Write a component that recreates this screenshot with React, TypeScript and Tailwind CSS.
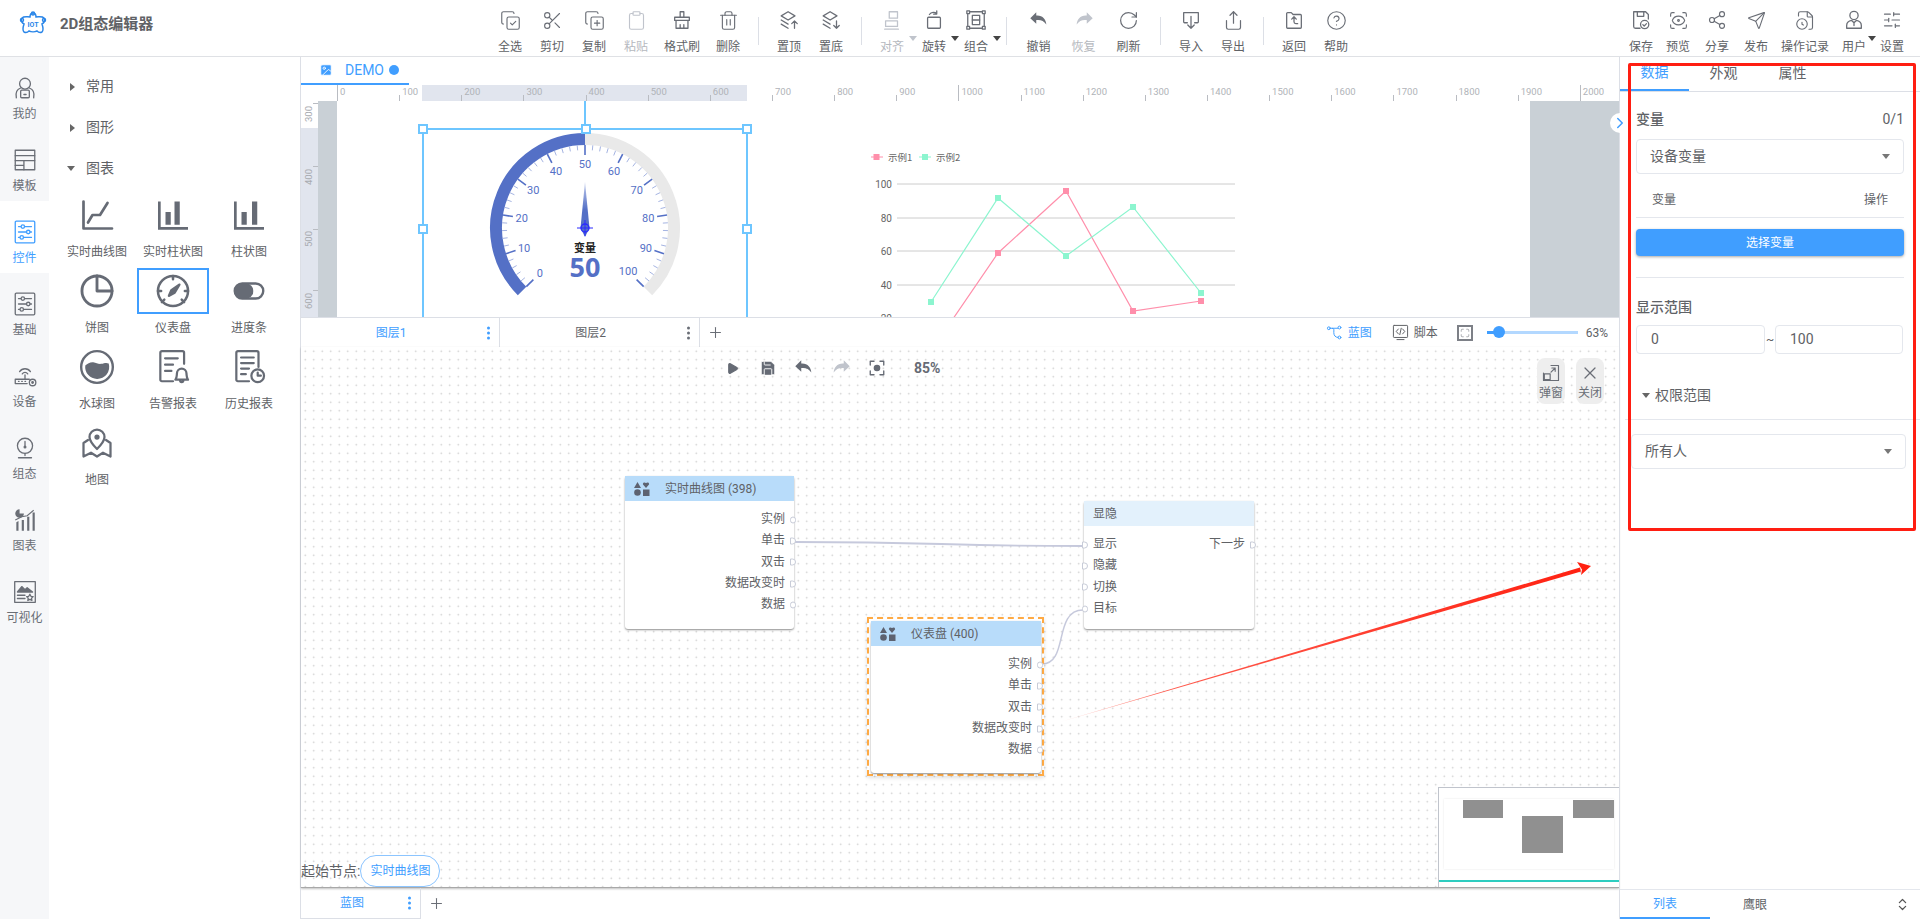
import {
  CircleHelp,
  Clipboard,
  CopyCheck,
  CopyPlus,
  FileClock,
  Maximize,
  Play,
  RotateCw,
  Save,
  ScanEye,
  Scissors,
  Send,
  Share,
  Share2,
  SlidersHorizontal,
  Trash2,
  ChevronRight,
  ChevronsUpDown,
  Plus,
  X,
  Image,
} from "lucide-react";
import type { ReactNode } from "react";

const FONT = "font-['Roboto','Noto_Sans_CJK_SC',sans-serif]";

function Svg({ size = 22, children, fill = "none", sw = 1.4 }: { size?: number; children: ReactNode; fill?: string; sw?: number }) {
  return (
    <svg width={size} height={size} viewBox="0 0 24 24" fill={fill} stroke="currentColor" strokeWidth={sw} strokeLinecap="round" strokeLinejoin="round">
      {children}
    </svg>
  );
}

function Caret({ className = "border-t-[#555]" }: { className?: string }) {
  return <span className={`inline-block h-0 w-0 border-x-[4px] border-t-[5px] border-x-transparent ${className}`} />;
}

/* toolbar drawings */
const Broom = () => (
  <Svg>
    <path d="M10 3h4v6h-4zM4 9h16v3.5H4zM5.5 12.5V21h13v-8.5M10 21v-4M14 21v-4" />
  </Svg>
);
const LayerTop = () => (
  <Svg>
    <path d="M11 3 3.5 7.5 11 12l7.5-4.5zM3.5 12 11 16.5M3.5 16.5 11 21M18 21v-8M15 16l3-3 3 3" />
  </Svg>
);
const LayerBottom = () => (
  <Svg>
    <path d="M11 3 3.5 7.5 11 12l7.5-4.5zM3.5 12 11 16.5M3.5 16.5 11 21M18 13v8M15 18l3 3 3-3" />
  </Svg>
);
const AlignIco = () => (
  <Svg>
    <rect x="9" y="3" width="9" height="7" />
    <rect x="5" y="13" width="13" height="6" />
    <path d="M4 22h15" />
  </Svg>
);
const RotateIco = () => (
  <Svg>
    <rect x="5" y="9" width="14" height="12" rx="1" />
    <path d="M7 6c2-3 6-3 8-1M15 2v3.500h-3.500" />
  </Svg>
);
const GroupIco = () => (
  <Svg>
    <path d="M5 3h14M5 21h14M3 5v14M21 5v14" />
    <rect x="2" y="2" width="3" height="3" />
    <rect x="19" y="2" width="3" height="3" />
    <rect x="2" y="19" width="3" height="3" />
    <rect x="19" y="19" width="3" height="3" />
    <rect x="8" y="7" width="8" height="10" />
    <path d="M8 12h8" />
  </Svg>
);
const UndoIco = () => (
  <svg width="22" height="22" viewBox="0 0 24 24" fill="currentColor">
    <path d="M9 7V3.500L2.500 10 9 16v-4c5-.5 8 .5 11 5-.5-6-4-10.500-11-10z" />
  </svg>
);
const RedoIco = () => (
  <svg width="22" height="22" viewBox="0 0 24 24" fill="currentColor">
    <path d="M15 7V3.500L21.500 10 15 16v-4c-5-.5-8 .5-11 5 .5-6 4-10.500 11-10z" />
  </svg>
);
const ImportIco = () => (
  <Svg>
    <path d="M8 15H5a1 1 0 0 1-1-1V4h16v10a1 1 0 0 1-1 1h-3M12 8v13M8.500 17.500 12 21l3.500-3.500" />
  </Svg>
);
const BackIco = () => (
  <Svg>
    <path d="M5 4h4l2 2h8a1 1 0 0 1 1 1v13a1 1 0 0 1-1 1H5a1 1 0 0 1-1-1V5a1 1 0 0 1 1-1z" />
    <path d="M9.500 11 12 8.500l2.500 2.500M12 8.500V14a2 2 0 0 0 2 2h2" />
  </Svg>
);
const SaveCheck = () => (
  <Svg>
    <path d="M11 21H6a2 2 0 0 1-2-2V3h13l3 3v5" />
    <path d="M8 3v5h7V3" />
    <circle cx="16" cy="17" r="4.500" />
    <path d="m14 17 1.500 1.500L18 16" />
  </Svg>
);
const UserIco = ({ size = 22 }: { size?: number }) => (
  <Svg size={size}>
    <circle cx="12" cy="7" r="4.500" />
    <path d="M4 21v-3c0-3 3-5 5.500-5.500L12 15l2.500-2.500C17 13 20 15 20 18v3zM12 15v3" />
  </Svg>
);

type Tool = { label: string; w: string; icon: ReactNode; off?: boolean; caret?: boolean };
type Piece = Tool | "sep";

const tools: Piece[] = [
  { label: "全选", w: "w-[42px]", icon: <CopyCheck size={21} strokeWidth={1.3} /> },
  { label: "剪切", w: "w-[42px]", icon: <Scissors size={21} strokeWidth={1.3} /> },
  { label: "复制", w: "w-[42px]", icon: <CopyPlus size={21} strokeWidth={1.3} /> },
  { label: "粘贴", w: "w-[42px]", icon: <Clipboard size={21} strokeWidth={1.3} />, off: true },
  { label: "格式刷", w: "w-[50px]", icon: <Broom /> },
  { label: "删除", w: "w-[42px]", icon: <Trash2 size={21} strokeWidth={1.3} /> },
  "sep",
  { label: "置顶", w: "w-[42px]", icon: <LayerTop /> },
  { label: "置底", w: "w-[42px]", icon: <LayerBottom /> },
  "sep",
  { label: "对齐", w: "w-[42px]", icon: <AlignIco />, off: true, caret: true },
  { label: "旋转", w: "w-[42px]", icon: <RotateIco />, caret: true },
  { label: "组合", w: "w-[42px]", icon: <GroupIco />, caret: true },
  "sep",
  { label: "撤销", w: "w-[45px]", icon: <UndoIco /> },
  { label: "恢复", w: "w-[45px]", icon: <RedoIco />, off: true },
  { label: "刷新", w: "w-[45px]", icon: <RotateCw size={21} strokeWidth={1.4} /> },
  "sep",
  { label: "导入", w: "w-[42px]", icon: <ImportIco /> },
  { label: "导出", w: "w-[42px]", icon: <Share size={21} strokeWidth={1.4} /> },
  "sep",
  { label: "返回", w: "w-[42px]", icon: <BackIco /> },
  { label: "帮助", w: "w-[42px]", icon: <CircleHelp size={21} strokeWidth={1.3} /> },
];

const rightTools: Tool[] = [
  { label: "保存", w: "w-[38px]", icon: <SaveCheck /> },
  { label: "预览", w: "w-[36px]", icon: <ScanEye size={21} strokeWidth={1.3} /> },
  { label: "分享", w: "w-[42px]", icon: <Share2 size={20} strokeWidth={1.4} /> },
  { label: "发布", w: "w-[36px]", icon: <Send size={19} strokeWidth={1.4} /> },
  { label: "操作记录", w: "w-[62px]", icon: <FileClock size={21} strokeWidth={1.3} /> },
  { label: "用户", w: "w-[36px]", icon: <UserIco />, caret: true },
  { label: "设置", w: "w-[40px]", icon: <SlidersHorizontal size={20} strokeWidth={1.4} /> },
];

function ToolItem({ t }: { t: Tool }) {
  return (
    <div className={`${t.w} relative flex shrink-0 flex-col items-center ${t.off ? "text-[#c0c4cc]" : "text-[#6a6e76]"}`}>
      <div className="flex h-[24px] items-center justify-center">{t.icon}</div>
      <span className={`mt-[7px] text-[12px] leading-[16px] ${t.off ? "text-[#b5b8be]" : "text-[#606266]"}`}>{t.label}</span>
      {t.caret && (
        <span className="absolute top-[16px] right-[-4px]">
          <Caret className={t.off ? "border-t-[#c0c4cc]" : "border-t-[#444]"} />
        </span>
      )}
    </div>
  );
}

function Logo() {
  return (
    <svg width="30" height="30" viewBox="0 0 30 30" fill="none" stroke="#2b86e8" strokeWidth="1.500">
      <path d="M15 4c2 0 3 2 3 4 3 0 6-1 8 1s0 5-2 6c1 3 2 6 0 8-2 1-4 0-5-1-2 1-6 1-8 0-1 1-3 2-5 1-2-2-1-5 0-8-2-1-4-4-2-6s5-1 8-1c0-2 1-4 3-4z" />
      <circle cx="15" cy="4.500" r="1.500" />
      <circle cx="4" cy="11" r="1.500" />
      <circle cx="26" cy="11" r="1.500" />
      <text x="15" y="18" textAnchor="middle" fontSize="7" fontWeight="700" fill="#2b86e8" stroke="none" fontFamily="Roboto">
        IOT
      </text>
    </svg>
  );
}

/* left nav drawings */
const navItems: { label: string; active?: boolean; icon: ReactNode }[] = [
  {
    label: "我的",
    icon: (
      <Svg size={26} sw={1.2}>
        <circle cx="12" cy="8" r="5" />
        <path d="M4 21c-1-5 1-8 4-9M20 21c1-5-1-8-4-9" />
        <rect x="8" y="14" width="8" height="7" rx="1" />
        <path d="M11 18h2" />
      </Svg>
    ),
  },
  {
    label: "模板",
    icon: (
      <Svg size={26} sw={1.2}>
        <rect x="3" y="3" width="18" height="18" />
        <path d="M3 8h18M3 12.500h18M11 12.500V21M3 17h8" />
      </Svg>
    ),
  },
  {
    label: "控件",
    active: true,
    icon: (
      <Svg size={26} sw={1.2}>
        <rect x="3" y="2" width="18" height="20" rx="1" />
        <path d="M6 7h12M6 12h12M6 17h12" />
        <circle cx="10" cy="7" r="1.600" fill="white" />
        <circle cx="15" cy="12" r="1.600" fill="white" />
        <circle cx="9" cy="17" r="1.600" fill="white" />
      </Svg>
    ),
  },
  {
    label: "基础",
    icon: (
      <Svg size={26} sw={1.2}>
        <rect x="3" y="2" width="18" height="20" rx="1" />
        <path d="M6 7h12M6 12h12M6 17h12" />
        <circle cx="10" cy="7" r="1.600" fill="#f6f7f9" />
        <circle cx="15" cy="12" r="1.600" fill="#f6f7f9" />
        <circle cx="9" cy="17" r="1.600" fill="#f6f7f9" />
      </Svg>
    ),
  },
  {
    label: "设备",
    icon: (
      <Svg size={26} sw={1.2}>
        <path d="M7 8a6 6 0 0 1 10 0M9.500 10a3 3 0 0 1 5 0" />
        <path d="M12 11v4M14 19H3v-4h13" />
        <circle cx="19" cy="18" r="3" />
        <circle cx="19" cy="18" r=".7" fill="currentColor" />
        <path d="M6 17h.5M9 17h.5M12 17h.5" />
      </Svg>
    ),
  },
  {
    label: "组态",
    icon: (
      <Svg size={26} sw={1.2}>
        <circle cx="12" cy="10" r="7" />
        <path d="M12 6v5M6 21h12M12 17v2" />
        <circle cx="12" cy="11" r=".8" fill="currentColor" />
      </Svg>
    ),
  },
  {
    label: "图表",
    icon: (
      <svg width="26" height="26" viewBox="0 0 24 24" fill="currentColor">
        <path d="M3 6a4 4 0 0 1 4-4v4h4a4 4 0 0 1-8 0z" />
        <path d="M4 14l2-1v9H4zM9 12h2v10H9zM14 9h2v13h-2zM19 5h2v17h-2z" />
        <path d="M3 12l6-3 5-1 6-5" fill="none" stroke="currentColor" strokeWidth="1" />
      </svg>
    ),
  },
  {
    label: "可视化",
    icon: (
      <Svg size={26} sw={1.2}>
        <rect x="2.500" y="2.500" width="19" height="19" />
        <path d="M5 12l4-5 3 3 2-2 5 4z" fill="currentColor" />
        <path d="M5 15h7M5 18h7" />
        <path d="m16.500 14 1 2 2 .3-1.500 1.500.4 2-1.900-1-1.900 1 .4-2-1.500-1.500 2-.3z" />
      </Svg>
    ),
  },
];

function LeftNav() {
  return (
    <div className="flex w-[49px] shrink-0 flex-col bg-[#f6f7f9]">
      {navItems.map((n) => (
        <div key={n.label} className={`flex h-[72px] flex-col items-center pt-[17px] ${n.active ? "bg-white text-[#409eff]" : "text-[#6a6e76]"}`}>
          <div className="flex h-[28px] items-center">{n.icon}</div>
          <span className="mt-[4px] text-[12px] leading-[16px]">{n.label}</span>
        </div>
      ))}
    </div>
  );
}

/* widget palette drawings */
const widgets: { label: string; selected?: boolean; icon: ReactNode }[] = [
  {
    label: "实时曲线图",
    icon: (
      <Svg size={36} sw={1.8}>
        <path d="M3 3v18h19" />
        <path d="M6 17l3-5h5l5-8" />
      </Svg>
    ),
  },
  {
    label: "实时柱状图",
    icon: (
      <svg width="36" height="36" viewBox="0 0 24 24" fill="currentColor">
        <path d="M2 3h1.800v17H22v1.800H2zM7 10h3.500v8.500H7zM13 3h3.500v15.500H13z" />
        <path d="M7 10h3.500v8.500H7zM17.500 3H21v15.500h-3.500z" opacity="0" />
      </svg>
    ),
  },
  {
    label: "柱状图",
    icon: (
      <svg width="36" height="36" viewBox="0 0 24 24" fill="currentColor">
        <path d="M2 3h1.800v17H22v1.800H2zM7 10h3.500v8.500H7zM14 3h3.500v15.500H14z" />
      </svg>
    ),
  },
  {
    label: "饼图",
    icon: (
      <Svg size={38} sw={1.8}>
        <circle cx="12" cy="12" r="9.500" />
        <path d="M12 2.500V12h9.500" />
      </Svg>
    ),
  },
  {
    label: "仪表盘",
    selected: true,
    icon: (
      <Svg size={38} sw={1.6}>
        <circle cx="12" cy="12" r="9.500" />
        <path d="M12 2.500v2M2.500 12h2M19.500 12h2M5 19l1.500-1.500M19 19l-1.500-1.500" />
        <path d="m16 8-5 3.500L9.500 15 13 13z" fill="currentColor" />
      </Svg>
    ),
  },
  {
    label: "进度条",
    icon: (
      <svg width="36" height="36" viewBox="0 0 24 24">
        <rect x="2.500" y="7" width="19" height="10" rx="5" fill="none" stroke="currentColor" strokeWidth="1.600" />
        <rect x="2" y="7" width="13" height="10" rx="5" fill="currentColor" />
        <rect x="15" y="8" width="1.500" height="8" fill="white" />
      </svg>
    ),
  },
  {
    label: "水球图",
    icon: (
      <svg width="38" height="38" viewBox="0 0 24 24">
        <circle cx="12" cy="12" r="10" fill="none" stroke="currentColor" strokeWidth="1.500" />
        <path d="M4.600 11c1.500-1 3-2.200 5-2 2 .3 3 1.200 5 1 2-.2 3-1 4.800-.2A7.500 7.500 0 0 1 12 19.500 7.500 7.500 0 0 1 4.600 11z" fill="currentColor" />
      </svg>
    ),
  },
  {
    label: "告警报表",
    icon: (
      <Svg size={38} sw={1.4}>
        <path d="M12 21H5a1 1 0 0 1-1-1V3a1 1 0 0 1 1-1h13a1 1 0 0 1 1 1v7" />
        <path d="M7 6.500h8M7 10.500h5M7 14.500h4" />
        <path d="M13.500 20c1-1 .8-2.500 1-4a3 3 0 0 1 6 0c.2 1.500 0 3 1 4zM16.500 20.500a1 1 0 0 0 2 0" />
      </Svg>
    ),
  },
  {
    label: "历史报表",
    icon: (
      <Svg size={38} sw={1.4}>
        <path d="M12 21H5a1 1 0 0 1-1-1V3a1 1 0 0 1 1-1h12a1 1 0 0 1 1 1v9" />
        <path d="M7 6h8M7 9.500h8M7 13h5M7 16.500h3" />
        <circle cx="17.500" cy="17.500" r="4" />
        <path d="M17.500 15.500v2h2" />
      </Svg>
    ),
  },
  {
    label: "地图",
    icon: (
      <Svg size={36} sw={1.5}>
        <path d="M12 16c-3-3-5-5.500-5-8a5 5 0 0 1 10 0c0 2.500-2 5-5 8z" />
        <circle cx="12" cy="8" r="1" fill="currentColor" />
        <path d="M6 10 3 12v9l5-2.500 4 2.500 4-2.500 5 2.500v-9l-3-2" />
      </Svg>
    ),
  },
];

function Palette() {
  return (
    <div className="flex w-[252px] shrink-0 flex-col border-r border-[#dcdfe6] pt-[9px]">
      {[
        { label: "常用", open: false },
        { label: "图形", open: false },
        { label: "图表", open: true },
      ].map((g) => (
        <div key={g.label} className="flex h-[41px] items-center text-[14px] text-[#606266]">
          <span className="flex w-[37px] justify-end pr-[11px]">
            {g.open ? <Caret className="border-t-[#666]" /> : <span className="h-0 w-0 border-y-[4px] border-l-[5px] border-y-transparent border-l-[#666]" />}
          </span>
          {g.label}
        </div>
      ))}
      <div className="mt-[3px] grid grid-cols-[76px_76px_76px] pl-[10px]">
        {widgets.map((w) => (
          <div key={w.label} className="flex h-[76px] flex-col items-center">
            <div className={`flex h-[46px] w-[72px] items-center justify-center text-[#666b75] ${w.selected ? "border-2 border-[#409eff]" : ""}`}>{w.icon}</div>
            <span className="mt-[6px] text-[12px] leading-[16px] whitespace-nowrap text-[#606266]">{w.label}</span>
          </div>
        ))}
      </div>
    </div>
  );
}

/* gauge widget */
function Gauge() {
  const cx = 115;
  const cy = 127;
  const pt = (v: number, r: number) => {
    const a = ((225 - v * 2.7) * Math.PI) / 180;
    return { x: cx + r * Math.cos(a), y: cy - r * Math.sin(a) };
  };
  const arc = (from: number, to: number, r: number) => {
    const a = pt(from, r);
    const b = pt(to, r);
    return `M${a.x} ${a.y}A${r} ${r} 0 ${(to - from) * 2.7 > 180 ? 1 : 0} 1 ${b.x} ${b.y}`;
  };
  const ticks = [];
  for (let i = 0; i <= 50; i++) {
    const v = i * 2;
    const major = i % 5 === 0;
    const a = pt(v, 83);
    const b = pt(v, major ? 73 : 78);
    ticks.push(<line key={i} x1={a.x} y1={a.y} x2={b.x} y2={b.y} stroke={major ? "#5470c6" : "#a5b4e2"} strokeWidth={major ? 1.6 : 1} />);
  }
  return (
    <svg className="absolute top-0 left-[133px]" width="230" height="216" viewBox="0 0 230 216">
      <defs>
        <linearGradient id="needle" x1="0" y1="0" x2="0" y2="1">
          <stop offset="0" stopColor="#c3cdec" />
          <stop offset="0.5" stopColor="#5470c6" />
        </linearGradient>
      </defs>
      <path d={arc(50, 100, 89)} fill="none" stroke="#e9e9e9" strokeWidth="12" />
      <path d={arc(0, 50, 89)} fill="none" stroke="#5470c6" strokeWidth="12" />
      {ticks}
      {[0, 10, 20, 30, 40, 50, 60, 70, 80, 90, 100].map((v) => {
        const p = pt(v, v === 100 ? 61 : 64);
        return (
          <text key={v} x={p.x} y={p.y + 4} textAnchor="middle" fontSize="11" fill="#5470c6" fontFamily="Roboto">
            {v}
          </text>
        );
      })}
      <polygon points={`${cx},${cy - 46} ${cx - 4.5},${cy} ${cx},${cy + 9} ${cx + 4.5},${cy}`} fill="url(#needle)" />
      <circle cx={cx} cy={cy} r="4" fill="none" stroke="#2a2aff" strokeWidth="1.300" />
      <path d={`M${cx - 8} ${cy}h16M${cx} ${cy - 8}v16`} stroke="#2a2aff" strokeWidth="1" />
      <text x={cx} y={cy + 24} textAnchor="middle" fontSize="11" fontWeight="700" fill="#222" fontFamily="'Noto Sans CJK SC'">
        变量
      </text>
      <text x={cx} y={cy + 49} textAnchor="middle" fontSize="27" fontWeight="700" fill="#5470c6" fontFamily="'Open Sans',Roboto">
        50
      </text>
    </svg>
  );
}

/* line chart widget, coordinates are page px minus (867, 141) */
function LineChart() {
  const ox = 867;
  const oy = 141;
  const pink = [[931, 351], [998, 253], [1066, 191], [1133, 311], [1201, 301]];
  const green = [[931, 302], [998, 198], [1066, 256], [1133, 207], [1201, 293]];
  const line = (p: number[][]) => p.map(([x, y]) => `${x - ox},${y - oy}`).join(" ");
  const grid = [
    { l: "100", y: 184 },
    { l: "80", y: 218 },
    { l: "60", y: 251 },
    { l: "40", y: 285 },
    { l: "20", y: 318 },
  ];
  return (
    <svg className="absolute top-[40px] left-[530px]" width="380" height="200" viewBox="0 0 380 200">
      <path d="M4 16h12" stroke="#ff8fab" />
      <rect x="6.500" y="13" width="6" height="6" fill="#ff8fab" />
      <text x="21" y="19.500" fontSize="9.500" fill="#666" fontFamily="'Noto Sans CJK SC'">示例1</text>
      <path d="M52 16h12" stroke="#8cf5cf" />
      <rect x="55" y="13" width="6" height="6" fill="#8cf5cf" />
      <text x="69" y="19.500" fontSize="9.500" fill="#666" fontFamily="'Noto Sans CJK SC'">示例2</text>
      {grid.map((g) => (
        <g key={g.l}>
          <line x1="30" x2="368" y1={g.y - oy} y2={g.y - oy} stroke="#cccccc" strokeWidth="1" />
          <text x="25" y={g.y - oy + 3.500} textAnchor="end" fontSize="10" fill="#666" fontFamily="Roboto">{g.l}</text>
        </g>
      ))}
      <polyline points={line(pink)} fill="none" stroke="#ff8fab" strokeWidth="1.200" />
      <polyline points={line(green)} fill="none" stroke="#8cf5cf" strokeWidth="1.200" />
      {pink.map(([x, y]) => <rect key={x} x={x - ox - 3} y={y - oy - 3} width="6" height="6" fill="#ff8fab" />)}
      {green.map(([x, y]) => <rect key={x} x={x - ox - 3} y={y - oy - 3} width="6" height="6" fill="#8cf5cf" />)}
    </svg>
  );
}

function Handle({ className }: { className: string }) {
  return <span className={`absolute h-[10px] w-[10px] border-2 border-[#6ec6ff] bg-white ${className}`} />;
}

function Editor() {
  const marks = Array.from({ length: 22 }, (_, i) => i * 100);
  return (
    <div className="flex h-[232px] shrink-0 flex-col overflow-hidden">
      {/* top ruler */}
      <div className="relative flex h-[16px] shrink-0 pl-[36px]">
        <div className="absolute top-0 bottom-0 left-[121px] w-[325px] bg-[#e1e5ee]" />
        {marks.map((m) => (
          <div key={m} className="relative h-[16px] w-[62.15px] shrink-0">
            <span className={`absolute bottom-0 left-0 w-px bg-[#b9bcc2] ${m % 1000 === 0 ? "h-[16px]" : "h-[6px]"}`} />
            <span className="absolute top-[1px] left-[3px] text-[9.5px] leading-[12px] text-[#b0b3b8]">{m}</span>
          </div>
        ))}
      </div>
      <div className="flex min-h-0 flex-1">
        {/* left ruler */}
        <div className="relative w-[17px] shrink-0">
          <div className="absolute top-[27px] right-0 bottom-0 left-0 bg-[#e1e5ee]" />
          {[
            { l: "300", top: "top-[6px]", tick: "top-[2px]" },
            { l: "400", top: "top-[69px]", tick: "top-[65px]" },
            { l: "500", top: "top-[131px]", tick: "top-[128px]" },
            { l: "600", top: "top-[193px]", tick: "top-[189px]" },
          ].map((r) => (
            <div key={r.l}>
              <span className={`absolute right-0 h-px w-[5px] bg-[#b9bcc2] ${r.tick}`} />
              <span className={`absolute left-[-2px] h-[14px] w-[20px] -rotate-90 text-center text-[9.5px] leading-[14px] text-[#a8abb0] ${r.top}`}>{r.l}</span>
            </div>
          ))}
        </div>
        <div className="w-[19px] shrink-0 bg-[#c9d0d6]" />
        {/* canvas */}
        <div className="relative min-w-0 flex-1 overflow-hidden bg-white">
          <Gauge />
          <LineChart />
          <div className="absolute top-[27px] left-[85px] h-[260px] w-[326px] border-2 border-[#6ec6ff]">
            <Handle className="top-[-6px] left-[-6px]" />
            <Handle className="top-[-6px] left-[157px]" />
            <Handle className="top-[-6px] right-[-6px]" />
            <Handle className="top-[94px] left-[-6px]" />
            <Handle className="top-[94px] right-[-6px]" />
          </div>
          <span className="absolute top-0 left-[247px] h-[24px] w-[2px] bg-[#6ec6ff]" />
        </div>
        <div className="w-[89px] shrink-0 bg-[#c9d0d6]" />
      </div>
    </div>
  );
}

function Dots({ active }: { active?: boolean }) {
  const c = active ? "bg-[#409eff]" : "bg-[#6a6e76]";
  return (
    <span className="absolute top-1/2 right-[9px] flex -translate-y-1/2 flex-col gap-[2px]">
      <i className={`h-[3px] w-[3px] rounded-full ${c}`} />
      <i className={`h-[3px] w-[3px] rounded-full ${c}`} />
      <i className={`h-[3px] w-[3px] rounded-full ${c}`} />
    </span>
  );
}

function LayerRow() {
  return (
    <div className="flex h-[30px] shrink-0 items-center border-t border-[#dcdfe6] text-[12px]">
      <div className="relative flex h-full w-[199px] items-center justify-center border-r border-[#dcdfe6] pr-[18px] text-[#409eff]">
        图层1
        <Dots active />
      </div>
      <div className="relative flex h-full w-[200px] items-center justify-center border-r border-[#dcdfe6] pr-[18px] text-[#606266]">
        图层2
        <Dots />
      </div>
      <Plus size={17} strokeWidth={1.5} className="ml-[7px] text-[#6a6e76]" />
      <div className="ml-auto flex items-center pr-[11px] text-[#606266]">
        <span className="flex w-[46px] items-center justify-between text-[#409eff]">
          <Svg size={17}>
            <circle cx="4" cy="6" r="2" />
            <circle cx="19" cy="5" r="2" />
            <circle cx="19" cy="19" r="2" />
            <path d="M6 6h11M9 6c3 0 2 3 2 6 0 4 2 7 6 7" />
          </Svg>
          蓝图
        </span>
        <span className="ml-[20px] flex w-[46px] items-center justify-between">
          <Svg size={17}>
            <rect x="2" y="2" width="20" height="17" rx="1" />
            <path d="M7 22h10M9 7l-3 3.500L9 14M15 7l3 3.500-3 3.500M13 6l-2 9" />
          </Svg>
          脚本
        </span>
        <span className="ml-[19px] flex h-[16px] w-[16px] items-center justify-center border-2 border-[#7d8087] text-[#7d8087]">
          <Maximize size={10} strokeWidth={1.5} />
        </span>
        <div className="relative ml-[14px] h-[3px] w-[91px] bg-[#b3d8ff]">
          <span className="absolute top-0 left-0 h-[3px] w-[11px] bg-[#409eff]" />
          <span className="absolute top-[-5px] left-[6px] h-[12px] w-[12px] rounded-full bg-[#409eff]" />
        </div>
        <span className="ml-[8px]">63%</span>
      </div>
    </div>
  );
}

/* blueprint nodes */
function Port({ side, round }: { side: "l" | "r"; round?: boolean }) {
  return (
    <span
      className={`absolute top-1/2 h-[7px] w-[6px] -translate-y-1/2 border border-[#c8ccd8] bg-white ${side === "r" ? "right-[-2px]" : "left-[-2px]"} ${
        round ? "rounded-full" : "rounded-r-full"
      }`}
    />
  );
}

function NodeCard({
  pos,
  title,
  head,
  icon,
  outs,
  ins,
  pad,
  bar,
}: {
  pos: string;
  title: string;
  head: string;
  icon?: boolean;
  outs: { t: string; round?: boolean }[];
  ins?: { t: string; round?: boolean }[];
  pad: string;
  bar?: boolean;
}) {
  return (
    <div className={`absolute rounded-[3px] bg-white shadow-[0_1px_2px_rgba(0,0,0,0.45)] ${pos}`}>
      <div className={`flex h-[25px] items-center text-[12px] text-[#606266] ${head} ${pad}`}>
        {icon && (
          <svg width="16" height="14" viewBox="0 0 16 14" fill="#5d6270" className="mr-[15px]">
            <path d="M3.500 0 7 6H0zM12 6 9 2.500C8.500 1 10 -.5 12 1c2-1.500 3.500 0 3 1.500z" />
            <circle cx="3.500" cy="10.500" r="3.300" />
            <rect x="9" y="7.500" width="6.500" height="6.500" />
          </svg>
        )}
        {title}
      </div>
      <div className="flex justify-between pt-[8px] text-[12px] leading-[21.3px] text-[#606266]">
        {ins && (
          <div className="flex flex-col">
            {ins.map((r) => (
              <div key={r.t} className="relative h-[21.3px] pl-[9px]">
                <Port side="l" round={r.round} />
                {r.t}
              </div>
            ))}
          </div>
        )}
        <div className="ml-auto flex flex-col items-end">
          {outs.map((r) => (
            <div key={r.t} className={`relative h-[21.3px] pr-[9px] ${bar ? "w-full text-right" : ""}`}>
              {r.t}
              <Port side="r" round={r.round} />
            </div>
          ))}
        </div>
      </div>
    </div>
  );
}

const widgetOuts = [
  { t: "实例", round: true },
  { t: "单击" },
  { t: "双击" },
  { t: "数据改变时" },
  { t: "数据", round: true },
];

function Blueprint() {
  return (
    <div className="relative min-h-0 flex-1 border-b border-[#a8a8a8] bg-[radial-gradient(circle,#c9c9c9_0.8px,transparent_1px)] bg-size-[8.5px_8.5px] shadow-[0_1px_2px_rgba(0,0,0,0.25)]">
      {/* top controls */}
      <div className="absolute top-[11px] left-[413px] flex h-[20px] items-center text-[#666b75]">
        <span className="flex w-[36px] justify-center"><Play size={13} fill="currentColor" /></span>
        <span className="flex w-[36px] justify-center"><Save size={18} fill="currentColor" stroke="white" strokeWidth={1.2} /></span>
        <span className="flex w-[36px] justify-center"><UndoIco /></span>
        <span className="flex w-[37px] justify-center text-[#c0c4cc]"><RedoIco /></span>
        <span className="flex w-[35px] justify-center">
          <Svg size={18} sw={1.8}>
            <path d="M8 3H3v5M16 3h5v5M8 21H3v-5M16 21h5v-5" />
            <circle cx="12" cy="12" r="3.500" fill="currentColor" />
          </Svg>
        </span>
        <span className="ml-[20px] text-[14px] font-bold">85%</span>
      </div>
      <div className="absolute top-[11px] right-[15px] flex gap-[11px] text-[#6a6e76]">
        <div className="flex h-[46px] w-[28px] flex-col items-center rounded-lg bg-[#eeeeee] pt-[5px]">
          <Svg size={20}>
            <path d="M12 3h9v18H3v-9" />
            <path d="M3 3h6M3 3v5" opacity="0" />
            <rect x="4" y="13" width="7" height="7" />
            <path d="M12 11l5-5M13 6h4v4" />
          </Svg>
          <span className="mt-[2px] text-[12px] leading-[16px] whitespace-nowrap">弹窗</span>
        </div>
        <div className="flex h-[46px] w-[28px] flex-col items-center rounded-lg bg-[#eeeeee] pt-[5px]">
          <X size={20} strokeWidth={1.5} />
          <span className="mt-[2px] text-[12px] leading-[16px] whitespace-nowrap">关闭</span>
        </div>
      </div>

      {/* connections */}
      <svg className="absolute inset-0 h-full w-full">
        <defs>
          <linearGradient id="arrowFade" gradientUnits="userSpaceOnUse" x1="759" y1="375" x2="1290" y2="219">
            <stop offset="0" stopColor="#ffd0cc" />
            <stop offset="0.2" stopColor="#ff5a4d" />
            <stop offset="1" stopColor="#ff2010" />
          </linearGradient>
        </defs>
        <path d="M494 195C640 195 640 199 782 199" fill="none" stroke="#c6c9dc" strokeWidth="1.800" />
        <path d="M741 317C768 317 752 263 782 263" fill="none" stroke="#c6c9dc" strokeWidth="1.500" />
        <polygon points="759,375 1279,220.500 1280,224.500" fill="url(#arrowFade)" />
        <polygon points="1276,215 1290,219 1280,228 1281,222.500" fill="#ff2010" />
      </svg>

      <NodeCard pos="left-[324px] top-[129px] h-[153px] w-[169px]" title="实时曲线图 (398)" head="bg-[#b8dcfa]" pad="pl-[9px]" icon outs={widgetOuts} />
      <NodeCard
        pos="left-[783px] top-[154px] h-[128px] w-[170px]"
        title="显隐"
        head="bg-[#e3f1fc]"
        pad="pl-[9px]"
        ins={[{ t: "显示" }, { t: "隐藏" }, { t: "切换" }, { t: "目标", round: true }]}
        outs={[{ t: "下一步" }]}
      />
      <div className="absolute top-[270px] left-[566px] h-[159px] w-[177px] border-2 border-dashed border-[#ffaa44] shadow-[0_2px_4px_rgba(0,0,0,0.12)]" />
      <NodeCard pos="left-[570px] top-[274px] h-[152px] w-[170px]" title="仪表盘 (400)" head="bg-[#b8dcfa]" pad="pl-[9px]" icon outs={widgetOuts} />

      {/* start node */}
      <div className="absolute bottom-0 left-0 flex items-center text-[14px] text-[#606266]">
        起始节点:
        <span className="flex h-[32px] w-[80px] items-center justify-center rounded-full border border-[#8cc5ff] bg-white text-[12px] text-[#409eff]">实时曲线图</span>
      </div>

      {/* minimap */}
      <div className="absolute right-0 bottom-0 h-[100px] w-[181px] border-t border-l border-[#c0c4cc] bg-white">
        <div className="absolute top-[11px] left-[5px] h-[70px] w-[170px] shadow-[0_0_2px_rgba(0,0,0,0.1)]" />
        <div className="absolute top-[12px] left-[24px] h-[18px] w-[40px] bg-[#909090]" />
        <div className="absolute top-[28px] left-[83px] h-[37px] w-[41px] bg-[#909090]" />
        <div className="absolute top-[12px] left-[134px] h-[18px] w-[41px] bg-[#909090]" />
        <div className="absolute right-0 bottom-[5px] left-0 h-[2px] bg-[#2ecdc0]" />
      </div>
    </div>
  );
}

function MainArea() {
  return (
    <div className="flex min-w-0 flex-1 flex-col">
      <div className="h-[28px] shrink-0">
        <div className="flex h-[28px] w-[108px] items-center border-b-2 border-[#409eff] pl-[18px] text-[14px] text-[#409eff]">
          <Image size={14} fill="#409eff" stroke="white" strokeWidth={1.5} />
          <span className="ml-[12px]">DEMO</span>
          <span className="ml-[5px] h-[10px] w-[10px] rounded-full bg-[#409eff]" />
        </div>
      </div>
      <Editor />
      <LayerRow />
      <Blueprint />
      <div className="flex h-[31px] shrink-0 items-center">
        <div className="relative ml-[-1px] flex h-full w-[121px] items-center justify-center border-x border-b border-[#dcdfe6] pr-[17px] text-[12px] text-[#409eff]">
          蓝图
          <Dots active />
        </div>
        <Plus size={17} strokeWidth={1.5} className="ml-[7px] text-[#6a6e76]" />
      </div>
    </div>
  );
}

function SelectBox({ label, className }: { label: string; className: string }) {
  return (
    <div className={`flex h-[35px] items-center justify-between rounded-[4px] border border-[#e4e7ed] pr-[13px] text-[14px] text-[#606266] ${className}`}>
      {label}
      <Caret className="border-t-[#777]" />
    </div>
  );
}

function RightPanel() {
  return (
    <div className="relative flex w-[301px] shrink-0 flex-col border-l border-[#dcdfe6]">
      <div className="flex h-[35px] shrink-0 border-b border-[#dcdfe6] text-[14px] text-[#606266]">
        <span className="flex w-[69px] items-center justify-center border-b-2 border-[#409eff] pb-[2px] text-[#409eff]">数据</span>
        <span className="flex w-[69px] items-center justify-center pb-[2px]">外观</span>
        <span className="flex w-[69px] items-center justify-center pb-[2px]">属性</span>
      </div>
      <div className="pr-[16px] pl-[16px] text-[#606266]">
        <div className="mt-[17px] flex h-[20px] items-center justify-between text-[14px]">
          <span className="font-medium">变量</span>
          <span>0/1</span>
        </div>
        <SelectBox label="设备变量" className="mt-[10px] pl-[13px]" />
        <div className="flex h-[44px] items-center justify-between border-b border-[#e4e7ed] pt-[8px] pr-[16px] pl-[16px] text-[12px]">
          <span>变量</span>
          <span>操作</span>
        </div>
        <div className="mt-[11px] flex h-[27px] items-center justify-center rounded-[4px] bg-[#409eff] text-[12px] text-white shadow-[0_1px_3px_rgba(0,0,0,0.35)]">选择变量</div>
        <div className="mt-[21px] h-px bg-[#e4e7ed]" />
        <div className="mt-[19px] h-[20px] text-[14px] leading-[20px] font-medium">显示范围</div>
        <div className="mt-[8px] flex items-center text-[14px]">
          <div className="flex h-[29px] w-[129px] items-center rounded-[4px] border border-[#e4e7ed] pl-[14px]">0</div>
          <span className="w-[10px] text-center text-[12px]">~</span>
          <div className="flex h-[29px] w-[128px] items-center rounded-[4px] border border-[#e4e7ed] pl-[14px]">100</div>
        </div>
        <div className="mt-[31px] flex h-[20px] items-center pl-[6px] text-[14px]">
          <Caret className="border-t-[#666]" />
          <span className="ml-[5px]">权限范围</span>
        </div>
      </div>
      <div className="mt-[14px] ml-[5px] h-px bg-[#e4e7ed]" />
      <SelectBox label="所有人" className="mt-[14px] mr-[14px] ml-[11px] pl-[13px]" />

      <div className="mt-auto flex h-[30px] items-center border-t border-[#e4e7ed] text-[12px] text-[#606266]">
        <span className="flex h-full w-[90px] items-center justify-center border-b-2 border-[#409eff] text-[#409eff]">列表</span>
        <span className="flex w-[90px] items-center justify-center">鹰眼</span>
        <ChevronsUpDown size={15} className="ml-auto mr-[10px] text-[#555]" />
      </div>

      {/* annotation + collapse handle */}
      <span className="absolute top-[56px] left-[-10px] flex h-[20px] w-[20px] items-center justify-center rounded-full bg-white text-[#409eff]">
        <ChevronRight size={18} strokeWidth={2} />
      </span>
      <div className="pointer-events-none absolute top-[6px] left-[8px] h-[468px] w-[288px] rounded-[2px] border-[3px] border-[#ff1e12]" />
    </div>
  );
}

export default function App() {
  return (
    <div className={`flex h-screen w-screen flex-col overflow-hidden bg-white ${FONT}`}>
      <header className="flex h-[57px] shrink-0 items-start border-b border-[#dfe1e5] pt-[8px]">
        <div className="flex w-[489px] shrink-0 items-center pt-[1px] pl-[18px]">
          <Logo />
          <span className="ml-[12px] text-[15px] font-bold text-[#606266]">2D组态编辑器</span>
        </div>
        <div className="flex items-start">
          {tools.map((t, i) =>
            t === "sep" ? <span key={i} className="mx-[9px] mt-[9px] h-[28px] w-px shrink-0 bg-[#dcdfe6]" /> : <ToolItem key={t.label} t={t} />,
          )}
        </div>
        <div className="ml-auto flex items-start pr-[8px]">
          {rightTools.map((t) => (
            <ToolItem key={t.label} t={t} />
          ))}
        </div>
      </header>
      <div className="flex min-h-0 flex-1">
        <LeftNav />
        <Palette />
        <MainArea />
        <RightPanel />
      </div>
    </div>
  );
}
